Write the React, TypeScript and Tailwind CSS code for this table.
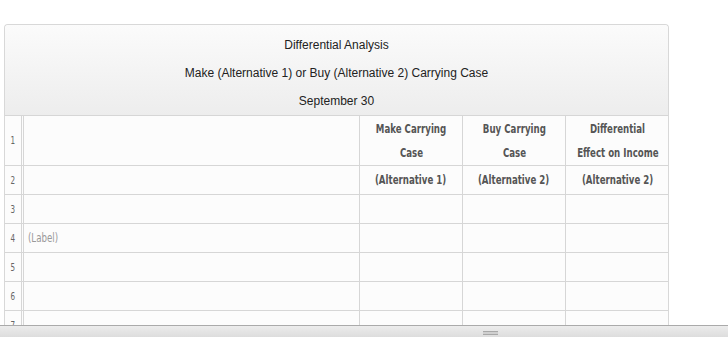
const narrow = "font-['Liberation_Sans_Narrow','DejaVu_Sans_Condensed',sans-serif]";

const rows = [
  { n: "2", label: "", cols: ["(Alternative 1)", "(Alternative 2)", "(Alternative 2)"] },
  { n: "3", label: "", cols: ["", "", ""] },
  { n: "4", label: "(Label)", cols: ["", "", ""] },
  { n: "5", label: "", cols: ["", "", ""] },
  { n: "6", label: "", cols: ["", "", ""] },
  { n: "7", label: "", cols: ["", "", ""] },
];

function Narrow({ children, origin = "origin-center" }: { children: React.ReactNode; origin?: string }) {
  return <span className={`inline-block whitespace-nowrap scale-x-[0.8] ${origin}`}>{children}</span>;
}

function NumCell({ n, h }: { n: string; h: string }) {
  return (
    <div
      className={`flex w-[19px] shrink-0 items-center justify-center border-r-[3px] border-double border-[#d6d6d6] ${narrow} text-[10px] text-[#666] ${h}`}
    >
      <Narrow>{n}</Narrow>
    </div>
  );
}

export default function App() {
  return (
    <div className="flex h-[337px] w-[728px] flex-col overflow-hidden bg-white">
      <div className="flex-1 overflow-hidden pl-[4px] pt-[24px]">
        <div className="w-[665px] rounded-t-[4px] border border-b-0 border-[#d8d8d8]">
          <div className="rounded-t-[4px] border-b border-[#d6d6d6] bg-gradient-to-b from-[#fbfbfb] to-[#ededed] pt-[6px] text-center font-['Liberation_Sans',Arial,sans-serif] text-[12px] leading-[28px] text-[#222]">
            <div>Differential Analysis</div>
            <div>Make (Alternative 1) or Buy (Alternative 2) Carrying Case</div>
            <div>September 30</div>
          </div>

          <div className="flex border-b border-[#d6d6d6] bg-[#fcfcfc]">
            <NumCell n="1" h="h-[49px]" />
            <div className="w-[336px] shrink-0 border-r border-[#d6d6d6]" />
            {["Make Carrying|Case", "Buy Carrying|Case", "Differential|Effect on Income"].map((t, i) => (
              <div
                key={i}
                className={`flex w-[103px] shrink-0 flex-col items-center justify-center border-[#d6d6d6] ${i < 2 ? "border-r" : ""} ${narrow} text-[12px] font-bold leading-[24px] text-[#555]`}
              >
                {t.split("|").map((s) => (
                  <Narrow key={s}>{s}</Narrow>
                ))}
              </div>
            ))}
          </div>

          {rows.map((r) => (
            <div key={r.n} className="flex border-b border-[#d6d6d6] bg-[#fcfcfc]">
              <NumCell n={r.n} h="h-[28px]" />
              <div
                className={`flex w-[336px] shrink-0 items-center border-r border-[#d6d6d6] pl-[4px] ${narrow} text-[12px] text-[#999]`}
              >
                {r.label && <Narrow origin="origin-left">{r.label}</Narrow>}
              </div>
              {r.cols.map((c, i) => (
                <div
                  key={i}
                  className={`flex w-[103px] shrink-0 items-center justify-center border-[#d6d6d6] ${i < 2 ? "border-r" : ""} ${narrow} text-[12px] font-bold text-[#555]`}
                >
                  {c && <Narrow>{c}</Narrow>}
                </div>
              ))}
            </div>
          ))}
        </div>
      </div>

      <div className="relative h-[12px] shrink-0 border-t border-[#aaaaaa] bg-gradient-to-b from-[#ececec] to-[#dddddd]">
        <div className="absolute left-[483px] top-[5px] h-[4px] w-[15px] border-y border-[#a8a8a8] bg-[#cfcfcf]" />
      </div>
    </div>
  );
}
